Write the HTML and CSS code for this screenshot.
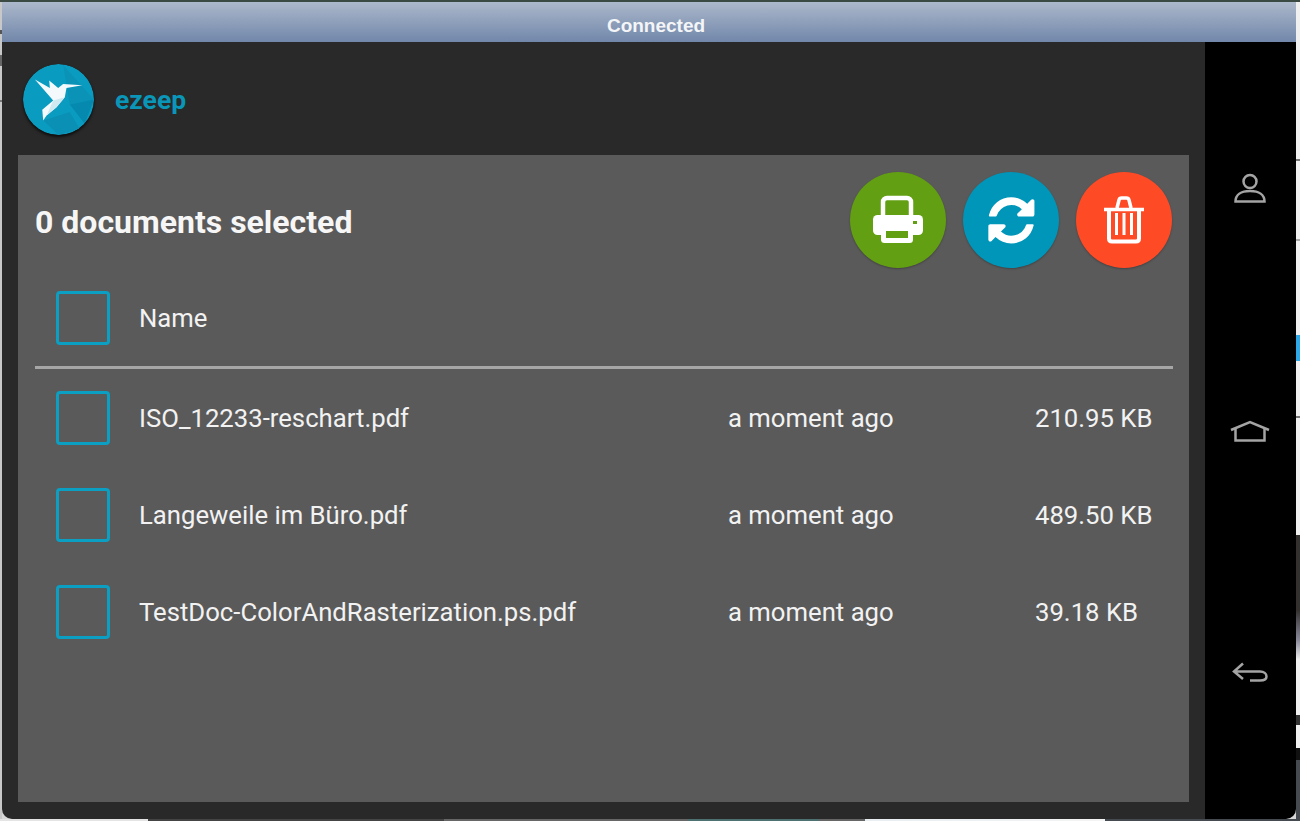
FILE: index.html
```html
<!DOCTYPE html>
<html lang="en">
<head>
    <meta charset="UTF-8">
    <meta name="viewport" content="width=device-width, initial-scale=1.0">
    <title>ezeep - Connected</title>
    <link rel="stylesheet" href="styles.css">
</head>
<body>
    <div class="window">
        <div class="titlebar">Connected</div>
        <div class="device">
            <div class="app">
                <div class="app-header">
                    <svg class="logo" viewBox="69 190 214 214">
                        <circle cx="176" cy="297" r="107" fill="#0a9cc0"/>
                        <polygon points="190,193 283,297 210,312" fill="#0a93b7"/>
                        <polygon points="210,312 283,297 255,370" fill="#0689ae"/>
                        <polygon points="130,360 210,335 240,385 176,404" fill="#0a90b5"/>
                        <polygon points="105,237 150,262 148,240 175,262 190,250 248,254 200,262 195,290 170,320 140,345 130,360 127,328 160,300" fill="#f4fafc"/>
                        <polygon points="160,300 195,290 170,320 140,345" fill="#cfe9f1"/>
                    </svg>
                    <span class="brand">ezeep</span>
                </div>
                <div class="panel">
                    <div class="toolbar">
                        <h2 class="selected-count">0 documents selected</h2>
                        <div class="actions">
                            <div class="round-btn btn-print">
                                <svg viewBox="0 0 96 96">
                                    <rect x="33" y="26" width="28" height="22" rx="4" fill="none" stroke="#fff" stroke-width="4.5"/>
                                    <rect x="23" y="43" width="50" height="20" rx="4.5" fill="#fff"/>
                                    <rect x="31" y="56" width="32" height="15" rx="3.5" fill="#fff"/>
                                    <rect x="36" y="59" width="22" height="7" fill="#639f12"/>
                                    <rect x="63" y="49" width="4" height="3" fill="#639f12"/>
                                </svg>
                            </div>
                            <div class="round-btn btn-sync">
                                <svg viewBox="0 0 96 96">
                                    <path transform="translate(21.5 21.5) scale(.03)" fill="#fff" d="M1639 1056q0 5-1 7-64 268-268 434.5t-478 166.5q-146 0-282.5-55t-243.5-157l-129 129q-19 19-45 19t-45-19-19-45v-448q0-26 19-45t45-19h448q26 0 45 19t19 45-19 45l-137 137q71 66 161 102t187 36q134 0 250-65t186-179q11-17 53-117 8-23 30-23h192q13 0 22.5 9.5t9.5 22.5zm25-800v448q0 26-19 45t-45 19h-448q-26 0-45-19t-19-45 19-45l138-138q-148-137-349-137-134 0-250 65t-186 179q-11 17-53 117-8 23-30 23h-199q-13 0-22.5-9.5t-9.5-22.5v-7q65-268 270-434.5t480-166.5q146 0 284 55.5t245 156.5l130-129q19-19 45-19t45 19 19 45z"/>
                                </svg>
                            </div>
                            <div class="round-btn btn-trash">
                                <svg viewBox="0 0 96 96">
                                    <path d="M28 37.5H68M41 36l2-8c.4-1.400 1.200-2 2.500-2h5c1.300 0 2.100.6 2.500 2l2 8" fill="none" stroke="#fff" stroke-width="3.500"/>
                                    <path d="M33 38V66.500C33 68.500 34 69.500 36 69.500H60C62 69.500 63 68.500 63 66.500V38" fill="none" stroke="#fff" stroke-width="4"/>
                                    <path d="M40.500 41V63M48 41V63M55.500 41V63" fill="none" stroke="#fff" stroke-width="3"/>
                                </svg>
                            </div>
                        </div>
                    </div>

                    <div class="doc-row doc-head">
                        <span class="check"></span>
                        <span>Name</span>
                    </div>
                    <div class="doc-row">
                        <span class="check"></span>
                        <span>ISO_12233-reschart.pdf</span>
                        <span>a moment ago</span>
                        <span>210.95 KB</span>
                    </div>
                    <div class="doc-row">
                        <span class="check"></span>
                        <span>Langeweile im Büro.pdf</span>
                        <span>a moment ago</span>
                        <span>489.50 KB</span>
                    </div>
                    <div class="doc-row">
                        <span class="check"></span>
                        <span>TestDoc-ColorAndRasterization.ps.pdf</span>
                        <span>a moment ago</span>
                        <span>39.18 KB</span>
                    </div>
                </div>
            </div>

            <div class="nav-bar">
                <svg class="nav-icon" viewBox="0 0 40 40">
                    <circle cx="20" cy="12.500" r="6.500"/>
                    <path d="M5.500 32.500C5.500 26 11 22 20 22S34.500 26 34.500 32.500Z"/>
                </svg>
                <svg class="nav-icon" viewBox="0 0 40 40">
                    <path d="M1 19L20 11 39 19"/>
                    <path d="M5.500 17.500V29.500H34.500V17.500"/>
                </svg>
                <svg class="nav-icon" viewBox="0 0 40 40">
                    <path d="M13 10.500L4 18.500 13 26M4 18.500H30C34 18.500 36.500 20.500 36.500 23.500S34 27.500 30 27.500H20"/>
                </svg>
            </div>
        </div>
    </div>
</body>
</html>
```

FILE: styles.css
```css
html, body {
    margin: 0;
    height: 100%;
}
body {
    width: 1300px;
    height: 821px;
    overflow: hidden;
    box-sizing: border-box;
    padding: 2px 4px 2px 2px;
    font-family: Roboto, "Liberation Sans", sans-serif;
    /* bits of the desktop that show around the window */
    background-color: #d8d8d8;
    background-image:
        linear-gradient(#3c4a44, #3c4a44),
        linear-gradient(to right, #e4e4e4 148px, #444 148px, #444 444px, #666 444px, #666 688px, #4d7070 688px, #4d7070 819px, #666 819px, #666 865px, #e8eef2 865px, #f4f4f4 1105px, #454a50 1105px),
        linear-gradient(#f0f0f0 159px, #777 159px, #777 161px, #f0f0f0 161px, #f0f0f0 239px, #aaa 239px, #aaa 241px, #f0f0f0 241px, #f0f0f0 335px, #2fa8e8 335px, #2fa8e8 361px, #f0f0f0 361px, #f0f0f0 416px, #777 416px, #777 418px, #f0f0f0 418px, #f0f0f0 535px, #33302e 535px, #33302e 610px, #889 640px, #f0f0f0 660px, #f0f0f0 715px, #333 715px, #333 725px, #f0f0f0 725px, #f0f0f0 748px, #111 748px, #111 760px, #454a50 760px),
        linear-gradient(#c8c8c8 30px, #555 30px, #555 34px, #c8c8c8 34px, #c8c8c8 55px, #666 55px, #666 66px, #c8c8c8 66px, #c8c8c8 100px, #777 100px, #777 102px, #c8c8c8 102px);
    background-size: 100% 2px, 100% 2px, 4px 100%, 2px 100%;
    background-position: top left, bottom left, top right, top left;
    background-repeat: no-repeat;
}
.window {
    height: 817px;
    display: flex;
    flex-direction: column;
    border-radius: 0 0 10px 10px;
    overflow: hidden;
}
.titlebar {
    height: 40px;
    flex: none;
    box-sizing: border-box;
    padding: 13px 0 0 14px;
    text-align: center;
    font-family: "Liberation Sans", Arial, sans-serif;
    font-size: 19px;
    font-weight: bold;
    line-height: 22px;
    color: #f4f5f7;
    background: linear-gradient(#acb8cb, #7187aa);
}
.device {
    flex: 1;
    display: flex;
    min-height: 0;
}
.app {
    flex: 1;
    display: flex;
    flex-direction: column;
    padding: 0 16px 17px;
    background-color: #292929;
}
.app-header {
    height: 113px;
    flex: none;
    display: flex;
    align-items: center;
    gap: 21px;
    padding-left: 5px;
}
.logo {
    width: 71px;
    height: 71px;
    margin-top: 1px;
    border-radius: 50%;
    box-shadow: 0 2px 3px rgba(0, 0, 0, 0.7);
}
.brand {
    margin-top: 2px;
    font-size: 26.500px;
    font-weight: bold;
    color: #0a96b8;
}
.panel {
    flex: 1;
    padding: 17px 16px 0 17px;
    background-color: #5a5a5a;
}
.toolbar {
    display: flex;
    align-items: center;
    justify-content: space-between;
    height: 96px;
}
.selected-count {
    margin: 4px 0 0;
    font-size: 32px;
    font-weight: bold;
    color: #f6f6f6;
}
.actions {
    display: flex;
    gap: 17px;
    margin-right: 1px;
}
.round-btn {
    width: 96px;
    height: 96px;
    border-radius: 50%;
    box-shadow: 0 1px 2px rgba(0, 0, 0, 0.25);
}
.round-btn svg {
    display: block;
}
.btn-print {
    background-color: #639f12;
}
.btn-sync {
    background-color: #0096b9;
}
.btn-trash {
    background-color: #ff4a26;
}
.doc-row {
    display: grid;
    grid-template-columns: 54px 618px 307px 1fr;
    align-items: center;
    height: 97px;
    padding-left: 21px;
    font-size: 25.700px;
    color: #f2f2f2;
}
.doc-row > :nth-child(2) {
    padding-left: 29px;
}
.doc-head {
    box-sizing: border-box;
    height: 101px;
    padding-top: 2px;
    border-bottom: 3px solid #a6a6a6;
}
.check {
    width: 54px;
    height: 54px;
    box-sizing: border-box;
    border: 3px solid #0a9fc3;
    border-radius: 4px;
}
.nav-bar {
    width: 91px;
    flex: none;
    display: flex;
    flex-direction: column;
    align-items: center;
    gap: 202px;
    padding-top: 127px;
    background-color: #000;
}
.nav-icon {
    width: 40px;
    height: 40px;
    margin-right: 1px;
    fill: none;
    stroke: #a4a4a4;
    stroke-width: 2.500;
}
```
